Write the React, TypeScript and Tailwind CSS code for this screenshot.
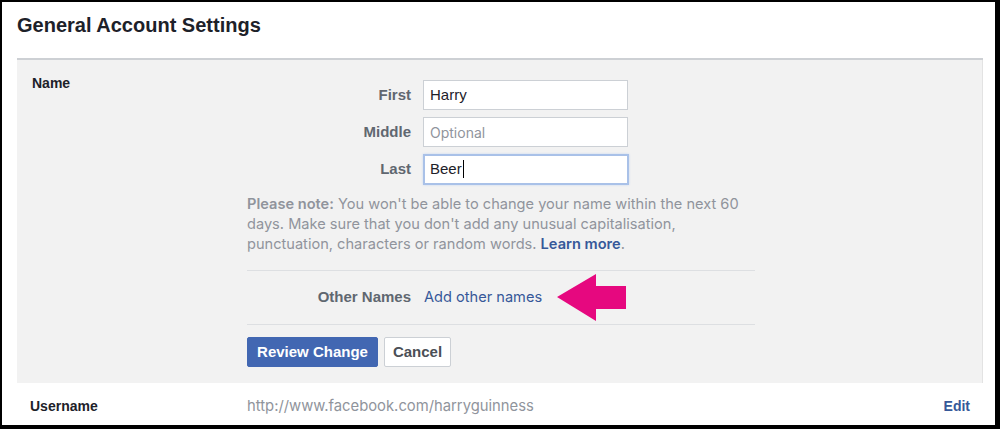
import React from "react";

const font = { fontFamily: '"Liberation Sans", Arial, sans-serif' };

function NameField({ label, value, placeholder, focused }: { label: string; value?: string; placeholder?: string; focused?: boolean }) {
  return (
    <div className="flex h-[30px] items-center">
      <div className="w-[164px] text-right text-[15px] font-bold text-[#606770]">{label}</div>
      <div
        className={
          focused
            ? "ml-[12px] flex h-[31px] w-[206px] items-center border-2 border-[#a9c1e8] bg-white pl-[5px] shadow-[0_0_2px_#c5d6f2] text-[15px] text-[#1d2129]"
            : "ml-[12px] flex h-[30px] w-[205px] items-center border border-[#ccd0d5] bg-white pl-[6px] text-[15px] text-[#1d2129]"
        }
      >
        {value ? (
          <>
            <span>{value}</span>
            {focused && <span className="ml-[1px] inline-block h-[18px] w-[1px] bg-black" />}
          </>
        ) : (
          <span className="font-['Inter'] text-[14px] text-[#90949c]">{placeholder}</span>
        )}
      </div>
    </div>
  );
}

function PinkArrow() {
  return (
    <svg width="70" height="47" viewBox="0 0 70 47" className="ml-[15px]">
      <polygon points="0,23 39,0 39,12 69,12 69,35 39,35 39,47" fill="#e6087f" />
    </svg>
  );
}

export default function App() {
  return (
    <div
      className="h-[429px] w-[1000px] overflow-hidden border-t-2 border-r-[5px] border-b-[4px] border-l-2 border-black bg-white"
      style={font}
    >
      <div className="w-[981px] pl-[15px]">
        <div className="h-[56px] pt-[11px] text-[20px] font-bold leading-[24px] text-[#1d2129]">
          General Account Settings
        </div>
        <div className="h-[2px] bg-[#cdd0d4]" />

        {/* Name panel */}
        <div className="flex h-[323px] border-r border-[#e3e3e3] bg-[#f2f2f2]">
          <div className="w-[230px] pt-[14px] pl-[15px] text-[14px] font-bold leading-[18px] text-[#1d2129]">Name</div>
          <div className="flex flex-col pt-[20px]">
            <div className="flex flex-col gap-[7px]">
              <NameField label="First" value="Harry" />
              <NameField label="Middle" placeholder="Optional" />
              <NameField label="Last" value="Beer" focused />
            </div>

            <p className="mt-[10px] w-[508px] pb-[16px] font-['Inter'] text-[14.6px] leading-[20px] text-[#90949c] whitespace-nowrap">
              <span className="font-semibold">Please note:</span> You won't be able to change your name within the next 60
              <br />
              days. Make sure that you don't add any unusual capitalisation,
              <br />
              punctuation, characters or random words. <span className="font-semibold text-[#365899]">Learn more</span>.
            </p>

            <div className="h-px w-[508px] bg-[#dddfe2]" />
            <div className="flex h-[53px] items-center">
              <div className="w-[164px] text-right text-[15px] font-bold text-[#606770]">Other Names</div>
              <span className="ml-[13px] font-['Inter'] text-[14.6px] text-[#365899]">Add other names</span>
              <PinkArrow />
            </div>
            <div className="h-px w-[508px] bg-[#dddfe2]" />

            <div className="mt-[12px] flex gap-[6px]">
              <button className="h-[30px] w-[131px] rounded-[2px] border border-[#4267b2] bg-[#4267b2] text-[15px] font-bold text-white">
                Review Change
              </button>
              <button className="h-[30px] w-[67px] rounded-[2px] border border-[#ccd0d5] bg-white text-[15px] font-bold text-[#4b4f56]">
                Cancel
              </button>
            </div>
          </div>
        </div>

        {/* Username row */}
        <div className="flex h-[42px] items-center pt-[4px] text-[14px]">
          <div className="w-[230px] pl-[13px] font-bold text-[#1d2129]">Username</div>
          <div className="flex-1 font-['Inter'] text-[14.8px] text-[#90949c]">http://www.facebook.com/harryguinness</div>
          <div className="pr-[13px] font-bold text-[#365899]">Edit</div>
        </div>
      </div>
    </div>
  );
}
